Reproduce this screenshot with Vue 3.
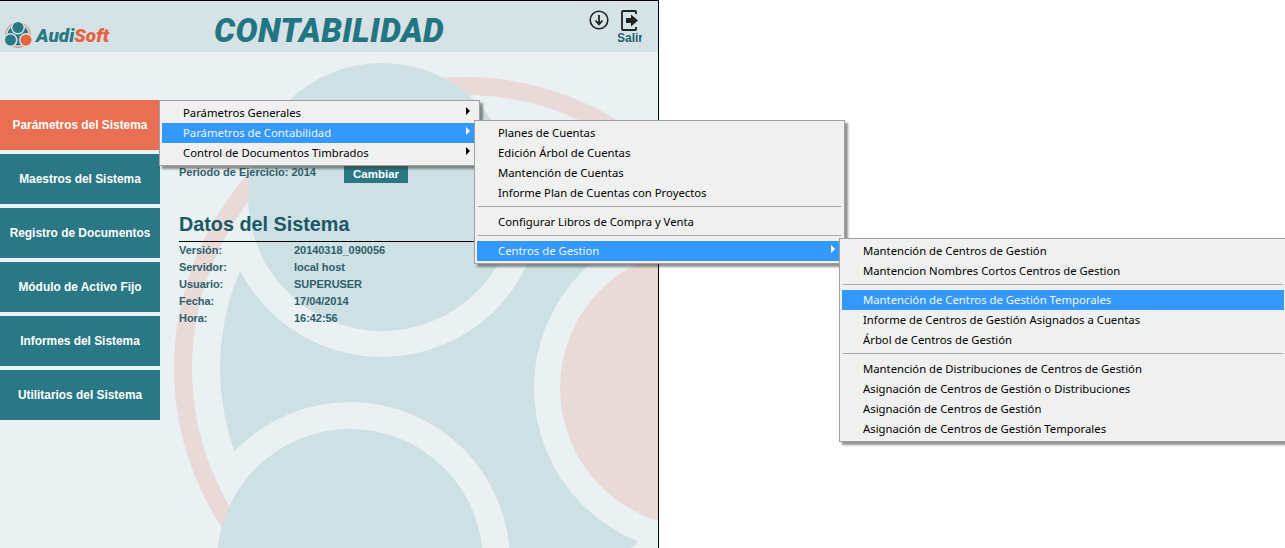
<script setup>
const navItems = [
  { label: 'Parámetros del Sistema', active: true },
  { label: 'Maestros del Sistema' },
  { label: 'Registro de Documentos' },
  { label: 'Módulo de Activo Fijo' },
  { label: 'Informes del Sistema' },
  { label: 'Utilitarios del Sistema' }
]

const datos = [
  ['Versión:', '20140318_090056'],
  ['Servidor:', 'local host'],
  ['Usuario:', 'SUPERUSER'],
  ['Fecha:', '17/04/2014'],
  ['Hora:', '16:42:56']
]

const menuOne = [
  { label: 'Parámetros Generales', arrow: true },
  { label: 'Parámetros de Contabilidad', arrow: true, active: true },
  { label: 'Control de Documentos Timbrados', arrow: true }
]

const menuTwo = [
  { label: 'Planes de Cuentas' },
  { label: 'Edición Árbol de Cuentas' },
  { label: 'Mantención de Cuentas' },
  { label: 'Informe Plan de Cuentas con Proyectos' },
  { sep: true },
  { label: 'Configurar Libros de Compra y Venta' },
  { sep: true },
  { label: 'Centros de Gestion', arrow: true, active: true }
]

const menuThree = [
  { label: 'Mantención de Centros de Gestión' },
  { label: 'Mantencion Nombres Cortos Centros de Gestion' },
  { sep: true },
  { label: 'Mantención de Centros de Gestión Temporales', active: true },
  { label: 'Informe de Centros de Gestión Asignados a Cuentas' },
  { label: 'Árbol de Centros de Gestión' },
  { sep: true },
  { label: 'Mantención de Distribuciones de Centros de Gestión' },
  { label: 'Asignación de Centros de Gestión o Distribuciones' },
  { label: 'Asignación de Centros de Gestión' },
  { label: 'Asignación de Centros de Gestión Temporales' }
]

const menus = [
  { id: 'one', items: menuOne },
  { id: 'two', items: menuTwo },
  { id: 'three', items: menuThree }
]
</script>

<template>
  <div class="page">
    <div class="app">
      <svg class="watermark" width="658" height="548" viewBox="0 0 658 548">
        <circle cx="465" cy="368" r="245" fill="#cde0e4" />
        <circle cx="382" cy="197" r="160" fill="#e9f1f3" />
        <circle cx="350" cy="562" r="160" fill="#e9f1f3" />
        <circle cx="699" cy="388" r="165" fill="#e9f1f3" />
        <circle cx="465" cy="368" r="282" fill="none" stroke="#e9dad8" stroke-width="18" />
        <circle cx="382" cy="197" r="134" fill="#cde0e4" />
        <circle cx="350" cy="562" r="133" fill="#cde0e4" />
        <circle cx="699" cy="388" r="139" fill="#e9dad8" />
      </svg>

      <header class="top">
        <div class="brand">
          <svg class="logo" width="30" height="30" viewBox="0 0 30 30">
            <circle cx="14" cy="15" r="12.5" fill="none" stroke="#e9805f" stroke-width="1" />
            <circle cx="14" cy="15" r="10.5" fill="#2a7885" />
            <circle cx="14" cy="7.5" r="7" fill="#d5e3e7" />
            <circle cx="6.5" cy="20" r="7" fill="#d5e3e7" />
            <circle cx="22" cy="20" r="7" fill="#d5e3e7" />
            <circle cx="14" cy="7.5" r="5.5" fill="#2a7885" />
            <circle cx="6.5" cy="20" r="5.5" fill="#2a7885" />
            <circle cx="22" cy="20" r="5.5" fill="#e8623f" />
          </svg>
          <span class="brand-name">Audi<em>Soft</em></span>
        </div>
        <h1 class="title">CONTABILIDAD</h1>
        <div class="actions">
          <svg class="down" width="20" height="20" viewBox="0 0 20 20">
            <circle cx="10" cy="10" r="8.800" fill="none" stroke="#222" stroke-width="1.6" />
            <path d="M10 5v9M6.500 10.500 10 14.500l3.500-4" fill="none" stroke="#222" stroke-width="1.8" />
          </svg>
          <div class="exit">
            <svg width="18" height="21" viewBox="0 0 18 21">
              <path d="M15 4V1.500Q15 1 14.500 1H2Q1 1 1 2V19Q1 20 2 20H14.500Q15 20 15 19.500V17" fill="none" stroke="#222" stroke-width="1.8" />
              <path d="M5 8H10V4.500L17 10.500 10 16.500V13H5Z" fill="#222" />
            </svg>
            <span>Salir</span>
          </div>
        </div>
      </header>

      <div class="content">
        <nav class="nav">
          <a v-for="item in navItems" :key="item.label" class="nav-item" :class="{ active: item.active }">{{ item.label }}</a>
        </nav>
        <main class="main">
          <div class="periodo">
            <span>Periodo de Ejercicio: 2014</span>
            <button class="cambiar" type="button">Cambiar</button>
          </div>
          <h2 class="datos-title">Datos del Sistema</h2>
          <div class="datos">
            <div v-for="row in datos" :key="row[0]" class="dato">
              <span class="dato-label">{{ row[0] }}</span>
              <span>{{ row[1] }}</span>
            </div>
          </div>
        </main>
      </div>
    </div>

    <div v-for="menu in menus" :key="menu.id" class="menu" :class="'menu-' + menu.id">
      <template v-for="(item, i) in menu.items" :key="i">
        <div v-if="item.sep" class="sep"></div>
        <div v-else class="row" :class="{ active: item.active }">
          <span>{{ item.label }}</span>
          <i v-if="item.arrow" class="arrow"></i>
        </div>
      </template>
    </div>
  </div>
</template>

<style>
html,
body {
  margin: 0;
  background: #fff;
}
</style>

<style scoped>
.page {
  position: relative;
  width: 1285px;
  height: 548px;
  overflow: hidden;
  background: #fff;
  font-family: "Liberation Sans", Arial, sans-serif;
}

.app {
  position: relative;
  box-sizing: border-box;
  width: 659px;
  height: 548px;
  overflow: hidden;
  background: #e9f1f3;
  border-top: 1px solid #000;
  border-right: 1px solid #000;
}

.watermark {
  position: absolute;
  top: -1px;
  left: 0;
}

.top {
  position: relative;
  display: flex;
  align-items: flex-start;
  height: 51px;
  background: #d5e3e7;
}

.brand {
  display: flex;
  align-items: center;
  width: 214px;
  height: 51px;
  padding: 0 0 0 4px;
  box-sizing: border-box;
}

.logo {
  margin-top: 17px;
}

.brand-name {
  margin: 17px 0 0 2px;
  font-family: Roboto, sans-serif;
  font-size: 19px;
  font-weight: 900;
  font-style: italic;
  color: #2a7885;
}

.brand-name em {
  color: #e8623f;
}

.title {
  margin: 10px 0 0;
  font-family: Roboto, sans-serif;
  font-size: 33px;
  line-height: 40px;
  font-weight: 900;
  font-style: italic;
  letter-spacing: 0.4px;
  color: #247582;
}

.actions {
  display: flex;
  align-items: flex-start;
  margin-left: auto;
  margin-right: 16px;
  gap: 9px;
}

.down {
  margin-top: 9px;
}

.exit {
  display: flex;
  flex-direction: column;
  align-items: center;
  width: 24px;
  margin-top: 9px;
  overflow: hidden;
}

.exit span {
  font-size: 12px;
  font-weight: 700;
  line-height: 14px;
  color: #1f5f6c;
}

.content {
  position: relative;
  display: flex;
}

.nav {
  display: flex;
  flex-direction: column;
  gap: 4px;
  width: 160px;
  margin-top: 48px;
}

.nav-item {
  display: flex;
  align-items: center;
  justify-content: center;
  height: 50px;
  background: #2a7885;
  color: #fff;
  font-size: 11.900px;
  font-weight: 700;
}

.nav-item.active {
  background: #e96f52;
}

.main {
  width: 296px;
  margin-left: 19px;
  padding-top: 113px;
  color: #2f5f6c;
  font-size: 11px;
  font-weight: 700;
}

.periodo {
  display: flex;
  align-items: flex-start;
  height: 19px;
}

.periodo span {
  width: 165px;
  line-height: 14px;
}

.cambiar {
  width: 64px;
  height: 17px;
  margin: 1px 0 0;
  padding: 0;
  border: 0;
  background: #2a7885;
  color: #fff;
  font-family: inherit;
  font-size: 11.500px;
  font-weight: 700;
  line-height: 17px;
}

.datos-title {
  margin: 26px 0 0 0;
  font-size: 19.800px;
  line-height: 28px;
  font-weight: 700;
  color: #1c5866;
}

.datos {
  margin-top: 3px;
  border-top: 1px solid #000;
}

.dato {
  display: flex;
  height: 17px;
  line-height: 17px;
  letter-spacing: -0.05px;
}

.dato-label {
  width: 115px;
}

.menu {
  position: absolute;
  box-sizing: border-box;
  padding: 2px;
  background: #f0f0f0;
  border: 1px solid #a0a0a0;
  box-shadow: 3px 3px 2px rgba(60, 60, 60, 0.55);
  font-family: "Noto Sans", sans-serif;
  font-size: 11.300px;
  color: #000;
}

.menu-one {
  left: 159px;
  top: 100px;
  width: 321px;
}

.menu-two {
  left: 474px;
  top: 120px;
  width: 371px;
}

.menu-three {
  left: 839px;
  top: 238px;
  width: 448px;
}

.row {
  position: relative;
  height: 20px;
  padding-left: 21px;
  line-height: 20px;
  white-space: nowrap;
}

.row.active {
  background: #3399ff;
  color: #f2f6fb;
}

.arrow {
  position: absolute;
  right: 7px;
  top: 4px;
  border-left: 4px solid #000;
  border-top: 4px solid transparent;
  border-bottom: 4px solid transparent;
}

.row.active .arrow {
  border-left-color: #fff;
}

.sep {
  height: 1px;
  margin: 3px 1px 5px 1px;
  background: #a8a8a8;
}
</style>
